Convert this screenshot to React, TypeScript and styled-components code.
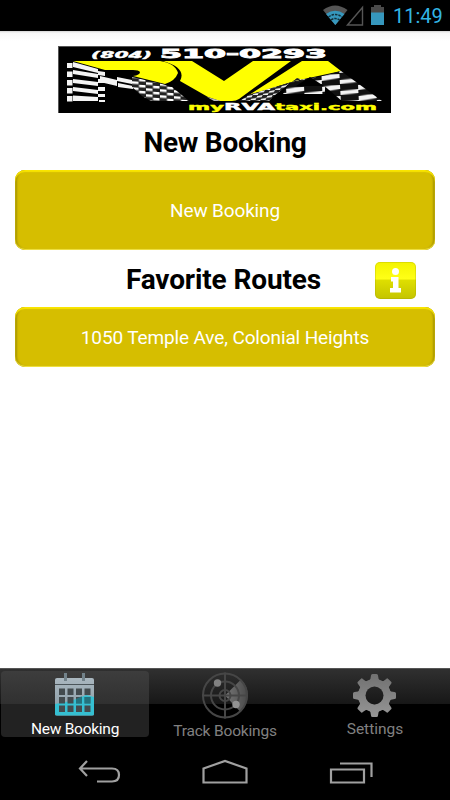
import React from "react";
import styled, { createGlobalStyle } from "styled-components";

const GlobalStyle = createGlobalStyle`
  * { box-sizing: border-box; }
  body { margin: 0; background: #fff; font-family: Roboto, "Noto Sans", sans-serif; }
  button { font-family: inherit; }
`;

const Screen = styled.div`
  width: 450px;
  height: 800px;
  display: flex;
  flex-direction: column;
  background: #fff;
  overflow: hidden;
`;

const StatusBar = styled.header`
  height: 31px;
  flex: none;
  background: #000;
  display: flex;
  justify-content: flex-end;
  padding-right: 7px;
`;

const Clock = styled.span`
  width: 50px;
  margin-left: 9px;
  color: #33b5e5;
  font-size: 20px;
  line-height: 33px;
  white-space: nowrap;
`;

const Content = styled.main`
  flex: 1;
  display: flex;
  flex-direction: column;
  padding: 15px 15px 0;
  background: linear-gradient(#d4d4d4, #f8f8f8 2px, #fff 10px);
`;

const Banner = styled.svg`
  width: 333px;
  height: 67px;
  flex: none;
  margin-left: 43px;
  display: block;
`;

const Heading = styled.h1<{ $spacing: string }>`
  margin: 0;
  padding-top: 1px;
  font-size: 28px;
  font-weight: 700;
  line-height: 57px;
  height: 57px;
  letter-spacing: ${(p) => p.$spacing};
  color: #000;
  text-align: center;
  white-space: nowrap;
`;

const HeadingRow = styled.div`
  display: grid;
  grid-template-columns: 60px 1fr 60px;
  align-items: center;
  height: 57px;
  padding-right: 3px;
`;

const InfoButton = styled.button`
  width: 41px;
  height: 37px;
  margin: 4px 0 0 3px;
  padding: 0;
  border: 0;
  border-radius: 5px;
  background: linear-gradient(#f3f300, #ffff16 45%, #dede00 50%, #c4c400);
  box-shadow: inset 0 0 0 1px rgba(150, 150, 0, 0.25);

  svg { display: block; }
`;

const GoldButton = styled.button<{ $height: number; $spacing: string }>`
  height: ${(p) => p.$height}px;
  flex: none;
  width: 100%;
  padding: 0;
  border: 0;
  border-radius: 10px;
  background: #d6be00;
  color: #fff;
  font-size: 19px;
  letter-spacing: ${(p) => p.$spacing};
  box-shadow: inset 0 2px 1px #f9e500, inset 0 -1px 1px #f3e545,
    inset 2px 0 2px #a89500, inset -2px 0 2px #a89500;
`;

const TabBar = styled.nav`
  height: 77px;
  flex: none;
  display: grid;
  grid-template-columns: repeat(3, 1fr);
  border-top: 1px solid #555;
  background: linear-gradient(#303030, #171717 35px, #000 35px);
`;

const Tab = styled.a<{ $active?: boolean; $drop: number; $spacing: string }>`
  height: 66px;
  margin: 2px 1px 0;
  border-radius: 4px;
  display: flex;
  flex-direction: column;
  align-items: center;
  background: ${(p) => (p.$active ? "linear-gradient(#3d3d3d, #303030 33px, #222 33px, #222)" : "transparent")};
  color: ${(p) => (p.$active ? "#fff" : "#808080")};
  font-size: 15.5px;
  letter-spacing: ${(p) => p.$spacing};
  white-space: nowrap;

  svg { display: block; flex: none; }
  span { line-height: 20px; margin-top: ${(p) => p.$drop}px; }
`;

const NavBar = styled.footer`
  height: 55px;
  flex: none;
  background: #000;
  display: grid;
  grid-template-columns: 152px 100px 152px;
  padding-left: 23px;
  justify-items: center;
  align-items: center;

  svg { display: block; margin-top: -1px; }
`;

const Logo = () => (
  <Banner viewBox="58 46 333 67" aria-label="RVA taxi">
    <defs>
      <pattern id="leg" width="14" height="6" x="132" y="78" patternUnits="userSpaceOnUse" patternTransform="skewY(4)">
        <rect width="14" height="6" fill="#222" />
        <path d="M0 0h6.500v2.500H0zM7 3h6.500v2.500H7z" fill="#fff" />
      </pattern>
      <pattern id="fine" width="10" height="5" patternUnits="userSpaceOnUse" patternTransform="skewX(-24)">
        <rect width="10" height="5" fill="#222" />
        <path d="M0 1l5-1v2L0 3zM5 4l5-1v2H5z" fill="#eee" />
      </pattern>
      <pattern id="wide" width="36" height="11" x="322" y="74" patternUnits="userSpaceOnUse" patternTransform="rotate(-3 340 85)">
        <rect width="36" height="11" fill="#111" />
        <path d="M0 1l18-2v5L0 6zM18 6l18-1v4l-18 1z" fill="#f4f4f4" />
      </pattern>
    </defs>
    <rect x="58" y="46" width="333" height="67" fill="#000" />
    <path d="M58 46.500h333M58.500 46v67" fill="none" stroke="#555" />
    <g fill="#fff" fontFamily="DejaVu Sans" fontWeight="700" stroke="#fff">
      <text x="91" y="57.500" fontSize="9.500" fontStyle="oblique" textLength="61" lengthAdjust="spacingAndGlyphs" strokeWidth=".4">(804)</text>
      <text x="160" y="57.500" fontSize="12" textLength="167" lengthAdjust="spacingAndGlyphs" strokeWidth=".8">510-0293</text>
    </g>
    <g fill="#f4f4f4">
      <path d="M67 63h5.500v5H67zM67 71.500h5.500v5.500H67zM67 80h5.500v5.500H67zM67 88h5.500v5.500H67zM67 96h5.500v5.500H67z" />
      <path d="M73 62l25 7v4l-25-6zM73 70l25 4v4l-25-4zM73 79l25 3v4l-25-3zM73 87l25 3v4l-25-3zM73 95.500l25 1.500v4H73z" />
      <path d="M98 71l7 1v4l-7-1zM98 79h7v4h-7zM98 87h7v4h-7zM98 94h7v3h-7zM99 100h6v2h-6z" />
      <path d="M100 76l17 4v6l-17-4zM117 77l15 3v4l-15-3zM118 83l15 3v3l-15-2z" />
    </g>
    <path d="M132 77l30 7 10 3 17 14h-38l-9-5-10-9z" fill="url(#leg)" />
    <path d="M73 61h87q15 2 18 12-3 8-13 11l-32-8q7-1 7-4-1-2-7-2h-28z" fill="#ff0" />
    <path d="M163 61h29l32 20 29-20h38l-52 38q-3 2-7 2h-12l-12-4-28-16q7-13-17-20z" fill="#ff0" />
    <path d="M302 61h26l13 10-46 10-46 14z" fill="#ff0" />
    <path d="M207 97l14 4h-7z" fill="#bbb" />
    <path d="M248 95l47-14 20-4 11 11-29-10-22 17-6 6h-29z" fill="url(#fine)" />
    <path d="M289 83l36-7v18h-42z" fill="url(#wide)" />
    <path d="M296 86l14-9 14 9z" fill="#000" />
    <path d="M315 78l26-7 41 30h-40z" fill="url(#wide)" />
    <g fontFamily="DejaVu Sans" fontWeight="700" fontSize="9" strokeWidth=".4">
      <text x="188" y="109.500" fill="#ff0" stroke="#ff0" textLength="36" lengthAdjust="spacingAndGlyphs">my</text>
      <text x="224" y="109.500" fill="#fff" stroke="#fff" textLength="51" lengthAdjust="spacingAndGlyphs">RVA</text>
      <text x="275" y="109.500" fill="#ff0" stroke="#ff0" textLength="102" lengthAdjust="spacingAndGlyphs">taxi.com</text>
    </g>
  </Banner>
);

const StatusIcons = () => (
  <svg width="64" height="31" viewBox="320 0 64 31">
    <path d="M323 10Q335 1 347.500 10L335.300 25z" fill="#555" />
    <path d="M326 14Q335 7.500 344.500 14L335.300 25z" fill="#3697bd" />
    <path d="M328.500 17q6.800-5 13.600 0M331 20q4.300-3 8.600 0" fill="none" stroke="#12303c" strokeWidth="1.500" strokeDasharray="2.500 1" />
    <path d="M347.500 25L362.500 7.500V25z" fill="none" stroke="#555" strokeWidth="1.400" />
    <path d="M371 7h3V5h7v2h3v6h-13z" fill="#4a4a4a" />
    <path d="M371 12.500h13V25h-13z" fill="#3697bd" />
  </svg>
);

const CalendarIcon = () => (
  <svg width="42" height="46" viewBox="54 672 42 46">
    <defs>
      <linearGradient id="calendar" x2="0" y2="1"><stop stopColor="#aab7bf" /><stop offset="1" stopColor="#8699a3" /></linearGradient>
    </defs>
    <path d="M55 681q0-2 2-2h35q2 0 2 2v34q0 1.500-2 1.500H57q-2 0-2-1.500z" fill="url(#calendar)" />
    <path d="M55 705q20-3 31-9l8 2v17q0 1.500-2 1.500H57q-2 0-2-1.500z" fill="#35bfd1" />
    <path d="M55 685.500h39" stroke="#4b555a" strokeWidth="1" />
    <path d="M65.500 674v8M83.500 674v8" stroke="#72828a" strokeWidth="3" />
    {[689.5, 698, 706.5].map((y) =>
      [59, 67.5, 76, 84.5].map((x) => <rect key={`${x}-${y}`} x={x} y={y} width="6" height="6.500" fill="#434b4e" />),
    )}
    <path d="M76 704.500V700l6-3v7.500zM84.500 698h6v6.500h-6z" fill="#118c9c" opacity=".6" />
  </svg>
);

const RadarIcon = () => (
  <svg width="48" height="48" viewBox="201 672.500 48 48">
    <defs>
      <linearGradient id="sweep"><stop stopColor="#777" /><stop offset="1" stopColor="#494949" /></linearGradient>
    </defs>
    <path d="M225 697L241 681Q248 688 248 697Q247 707 240 713z" fill="url(#sweep)" />
    <g fill="none" stroke="#464646" strokeWidth="2">
      <circle cx="225" cy="697" r="22" />
      <circle cx="225" cy="697" r="14" />
      <circle cx="225" cy="697" r="5.500" />
      <path d="M225 674v46M202 697h46" />
    </g>
    <circle cx="217.500" cy="684.500" r="3.700" fill="#818181" />
    <circle cx="236" cy="706" r="3.700" fill="#939393" />
  </svg>
);

const GearIcon = () => (
  <svg width="46" height="46" viewBox="-22.500 -24.500 46 46">
    <defs>
      <linearGradient id="gear" x2="0" y2="1"><stop stopColor="#707070" /><stop offset="1" stopColor="#969696" /></linearGradient>
      <mask id="gear-shape">
        <circle r="16.500" fill="#fff" />
        {[0, 45, 90, 135, 180, 225, 270, 315].map((angle) => (
          <path key={angle} transform={`rotate(${angle})`} d="M-6-14Q-3.500-16-3.500-20q0-1.500 1.500-1.500h4q1.500 0 1.500 1.500Q3.500-16 6-14z" fill="#fff" />
        ))}
        <circle r="9" fill="#000" />
      </mask>
    </defs>
    <rect x="-22" y="-22" width="44" height="44" fill="url(#gear)" mask="url(#gear-shape)" />
  </svg>
);

export default function App() {
  return (
    <>
      <GlobalStyle />
      <Screen>
        <StatusBar>
          <StatusIcons />
          <Clock>11:49</Clock>
        </StatusBar>
        <Content>
          <Logo />
          <Heading $spacing="-0.25px">New Booking</Heading>
          <GoldButton $height={80} $spacing="-0.15px">New Booking</GoldButton>
          <HeadingRow>
            <span />
            <Heading $spacing="-0.13px">Favorite Routes</Heading>
            <InfoButton aria-label="Information">
              <svg width="41" height="37" viewBox="0 0 41 37">
                <circle cx="20.500" cy="9.500" r="3.500" fill="#fff" />
                <path d="M16 15h7.500v11H26v4.500H15V26h3v-6.500h-2z" fill="#fff" />
              </svg>
            </InfoButton>
          </HeadingRow>
          <GoldButton $height={60} $spacing="-0.13px">1050 Temple Ave, Colonial Heights</GoldButton>
        </Content>
        <TabBar>
          <Tab $active $drop={2} $spacing="-0.25px"><CalendarIcon /><span>New Booking</span></Tab>
          <Tab $drop={2} $spacing="-0.17px"><RadarIcon /><span>Track Bookings</span></Tab>
          <Tab $drop={2} $spacing="0"><GearIcon /><span>Settings</span></Tab>
        </TabBar>
        <NavBar>
          <svg width="44" height="28" viewBox="78 758 44 28" fill="none" stroke="#a0a0a0" strokeWidth="2.200">
            <path d="M88 761l-7 7.500 7 7.500M81 768.500h32q7 0 7 6.500t-7 6.500H98" />
          </svg>
          <svg width="48" height="28" viewBox="201 757 48 28" fill="none" stroke="#a0a0a0" strokeWidth="2.200">
            <path d="M203.500 767.500L225 760l21.500 7.500v14h-43z" />
          </svg>
          <svg width="46" height="28" viewBox="328 757 46 28" fill="none" stroke="#a0a0a0" strokeWidth="2.200">
            <path d="M331 768.500h33v13h-33zM340 762.500h31.500V776" />
          </svg>
        </NavBar>
      </Screen>
    </>
  );
}
